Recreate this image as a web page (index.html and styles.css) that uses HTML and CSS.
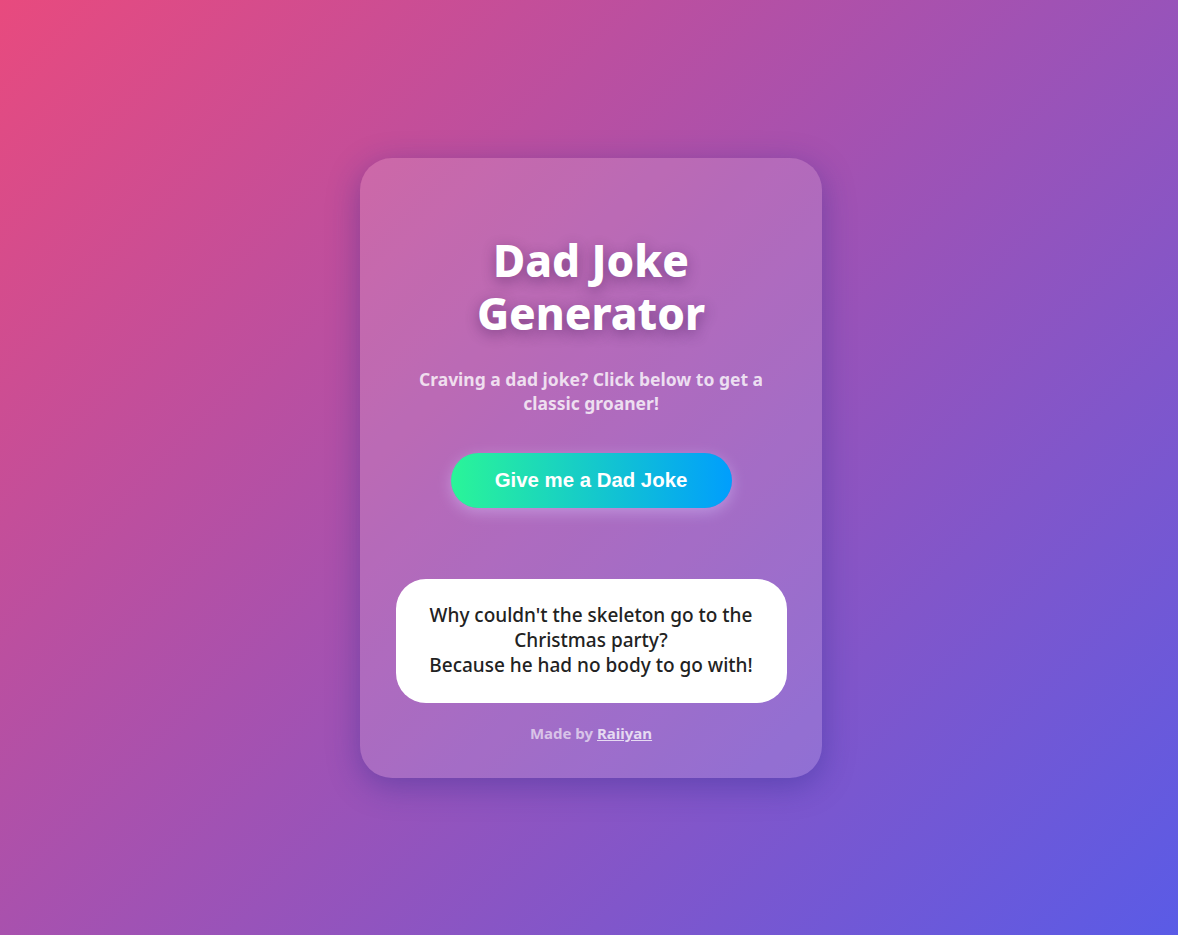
FILE: index.html
```html
<!DOCTYPE html>
<html lang="en">
<head>
<meta charset="utf-8">
<title>Dad Joke Generator</title>
<link rel="stylesheet" href="styles.css">
</head>
<body>
<main class="page">
  <section class="card">
    <h1 class="title">Dad Joke<br>Generator</h1>
    <p class="subtitle">Craving a dad joke? Click below to get a classic groaner!</p>
    <button class="btn" type="button">Give me a Dad Joke</button>
    <div class="joke">Why couldn't the skeleton go to the Christmas party?<br>Because he had no body to go with!</div>
    <p class="footer">Made by <a href="#">Raiiyan</a></p>
  </section>
</main>
</body>
</html>
```
FILE: styles.css
```css
html, body {
  margin: 0;
  padding: 0;
  height: 100%;
}
body {
  background: linear-gradient(135deg, #e84a7e 0%, #a052b4 50%, #5a5be6 100%);
  font-family: "Noto Sans", "DejaVu Sans", sans-serif;
}
.page {
  min-height: 100vh;
  display: flex;
  align-items: center;
  justify-content: center;
}
.card {
  box-sizing: border-box;
  width: 462px;
  height: 620px;
  margin-top: 1px;
  margin-left: 4px;
  padding: 76px 35px 0;
  border-radius: 32px;
  background: rgba(255, 255, 255, 0.15);
  box-shadow: 0 8px 32px rgba(31, 38, 135, 0.37);
  display: flex;
  flex-direction: column;
  align-items: center;
  text-align: center;
}
.title {
  margin: 0;
  font-size: 44px;
  line-height: 53px;
  font-weight: 800;
  color: #fff;
  text-shadow: 0 4px 14px rgba(60, 20, 80, 0.45);
}
.subtitle {
  margin: 27px 0 0;
  font-size: 17.5px;
  line-height: 24px;
  font-weight: 700;
  color: rgba(255, 255, 255, 0.78);
  max-width: 370px;
}
.btn {
  margin-top: 38px;
  width: 281px;
  height: 55px;
  border: none;
  border-radius: 28px;
  background: linear-gradient(90deg, #2af598 0%, #009efd 100%);
  color: #fff;
  font-family: "Liberation Sans", Arial, sans-serif;
  font-weight: 700;
  font-size: 20.4px;
  box-shadow: 0 4px 15px rgba(220, 200, 255, 0.45);
  cursor: pointer;
}
.joke {
  box-sizing: border-box;
  margin-top: 71px;
  width: 391px;
  height: 124px;
  padding: 24px 20px;
  background: #fff;
  border-radius: 30px;
  color: #222;
  font-size: 19px;
  line-height: 25px;
  font-weight: 500;
}
.footer {
  margin: 21px 0 0;
  font-size: 15px;
  line-height: 18px;
  font-weight: 700;
  color: rgba(255, 255, 255, 0.6);
}
.footer a {
  color: rgba(255, 255, 255, 0.75);
  text-decoration: underline;
}
```
